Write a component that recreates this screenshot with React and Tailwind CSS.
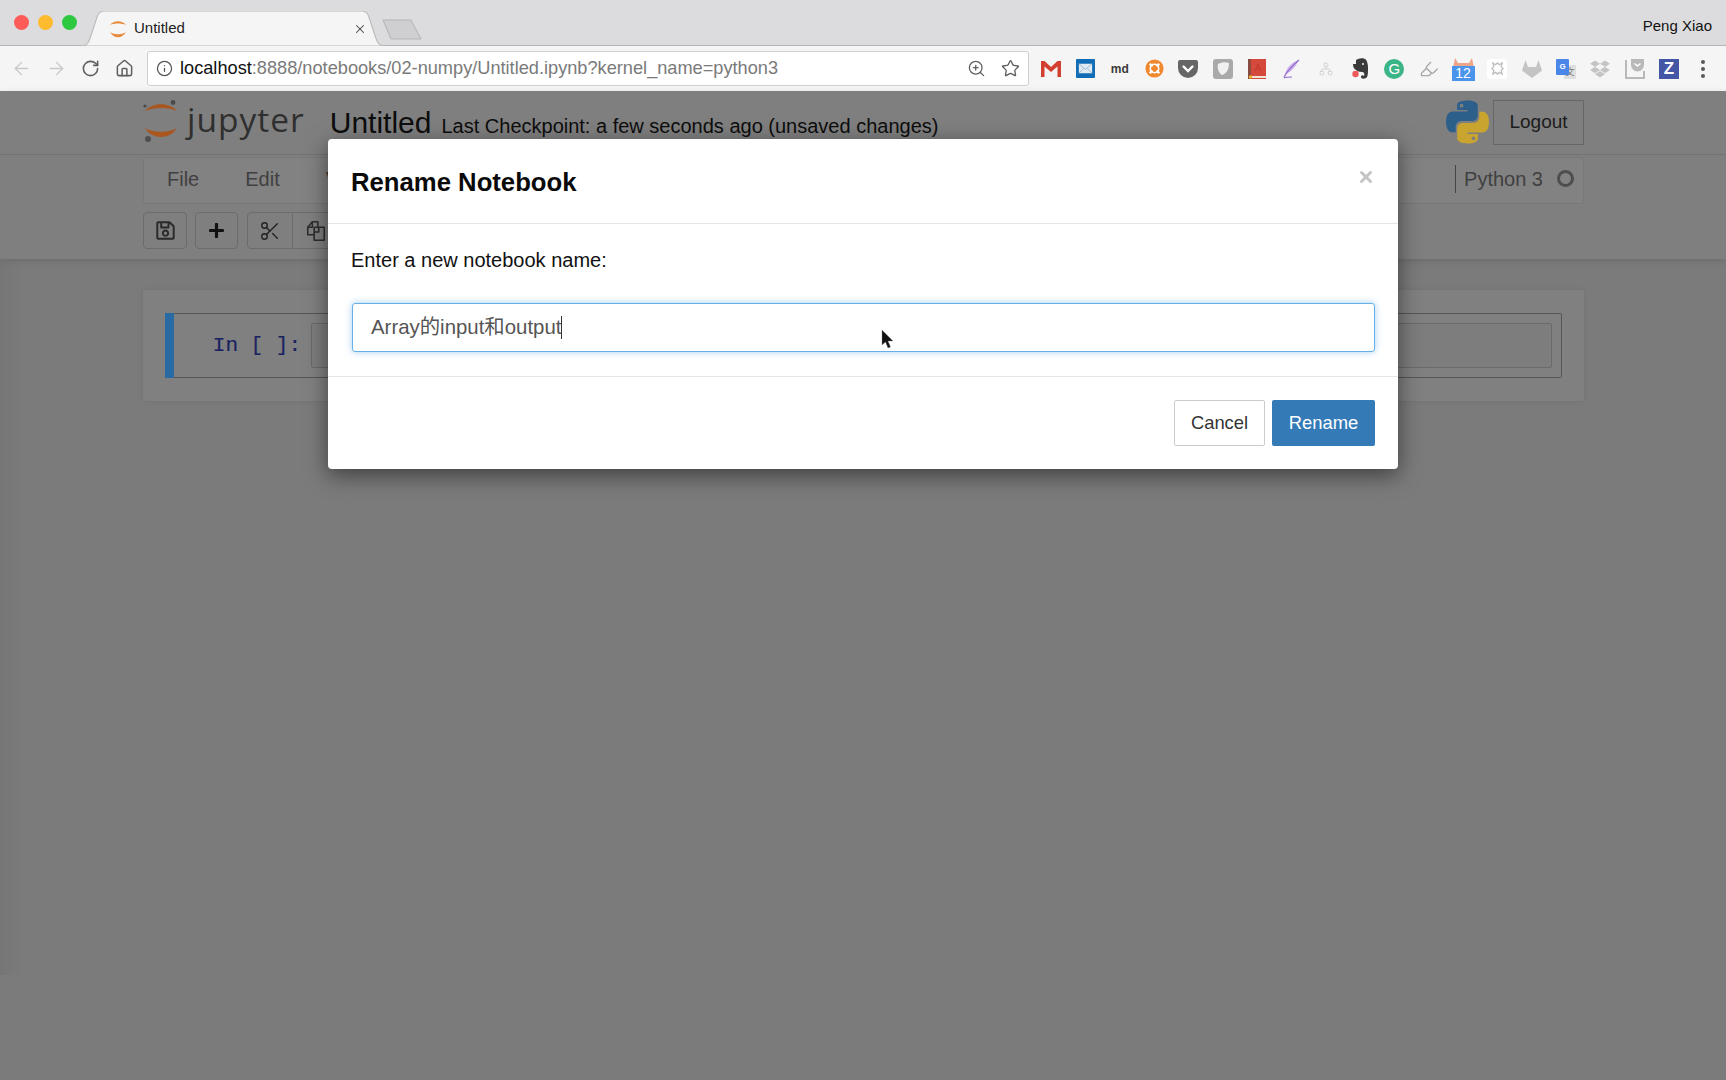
import { ArrowLeft, ArrowRight, RotateCw, Home, Info, ZoomIn, Star, X, Network, Highlighter } from 'lucide-react';
import { FaPlus, FaRegSave, FaDropbox } from 'react-icons/fa';
import { LuScissors } from 'react-icons/lu';

const sans = 'font-["Liberation_Sans",Arial,"Noto_Sans_CJK_SC",sans-serif]';

function JupyterMark({ className }) {
  return (
    <svg viewBox="0 0 36 44" className={className}>
      <path d="M2 12 C9 3 27 3 34 12 C26 8 10 8 2 12 Z" fill="#a9561f" />
      <path d="M2 29 C10 34 26 34 34 29 C27 41 9 41 2 29 Z" fill="#a9561f" />
      <circle cx="2" cy="7" r="1.6" fill="#4a4a4a" />
      <circle cx="30" cy="3.5" r="2.4" fill="#4a4a4a" />
      <circle cx="5" cy="40" r="3" fill="#4f4f4f" />
    </svg>
  );
}

function TabFavicon() {
  return (
    <svg viewBox="0 0 20 20" className="w-[20px] h-[20px] shrink-0">
      <path d="M2 6 C6 1 14 1 18 6 C14 4 6 4 2 6 Z" fill="#e98a3c" />
      <path d="M2 13 C6 16 14 16 18 13 C14 20 6 20 2 13 Z" fill="#e98a3c" />
    </svg>
  );
}

function PythonLogo() {
  const blue = 'M54.9 0C26.9 0 28.6 12.1 28.6 12.1l0 12.6h26.7v3.8H18s-18-2-18 26.3 15.7 27.3 15.7 27.3h9.4V68.9s-.5-15.7 15.4-15.7h26.6s14.9.2 14.9-14.4V14.6S85 0 54.9 0zM40.2 8.5a4.8 4.8 0 1 1 0 9.6 4.8 4.8 0 0 1 0-9.6z';
  return (
    <svg viewBox="0 0 111 111" className="w-[43px] h-[44px]">
      <path d={blue} fill="#2d5f8b" />
      <path d={blue} fill="#c9a42f" transform="rotate(180 55.5 55.5)" />
    </svg>
  );
}

function CopyIcon() {
  return (
    <svg viewBox="0 0 24 24" className="w-[22px] h-[22px]" fill="none" stroke="#2c2c2c" strokeWidth="1.7" strokeLinejoin="round">
      <path d="M10 16H3V8l5-6h6v6" />
      <path d="M8 2v6H3" />
      <path d="M10 8h5l6 0v14H10z" fill="#7d7d7d" />
      <path d="M15 8v5h-5" />
    </svg>
  );
}

function ToolButton({ children, className = 'w-[44px] rounded-[4px]' }) {
  return (
    <div className={`h-[37px] border border-[#6c6c6c] flex items-center justify-center ${className}`}>
      {children}
    </div>
  );
}

const ext = {
  gmail: (
    <svg viewBox="0 0 20 18" className="w-[20px] h-[18px]">
      <rect width="20" height="17" y="0.5" fill="#f3f3f3" />
      <path d="M0 1h3.500L10 7l6.500-6H20v16h-3.500V6.500L10 12 3.500 6.500V17H0z" fill="#d23f31" />
    </svg>
  ),
  mail: (
    <svg viewBox="0 0 20 20" className="w-[19px] h-[19px]">
      <rect width="20" height="20" rx="1" fill="#0f6cb5" />
      <rect x="3" y="5" width="14" height="10" fill="#dfeaf3" />
      <path d="M3 5l7 6 7-6M3 15l5-5M17 15l-5-5" fill="none" stroke="#8fb1cc" strokeWidth="0.8" />
    </svg>
  ),
  md: <span className={`text-[12px] font-bold text-[#3a3a3a] ${sans}`}>md</span>,
  orange: (
    <svg viewBox="0 0 20 20" className="w-[19px] h-[19px]">
      <circle cx="10" cy="10" r="9.500" fill="#f0882e" />
      <circle cx="10" cy="10" r="4.500" fill="none" stroke="#fff" strokeWidth="1.600" />
      <path d="M5 5l3 3M15 5l-3 3M5 15l3-3M15 15l-3-3" stroke="#fff" strokeWidth="2.600" />
      <circle cx="10" cy="10" r="2.800" fill="#f0882e" />
    </svg>
  ),
  pocket: (
    <svg viewBox="0 0 20 18" className="w-[20px] h-[18px]">
      <path d="M0 2a2 2 0 0 1 2-2h16a2 2 0 0 1 2 2v6a10 10 0 0 1-20 0z" fill="#666" />
      <path d="M5.500 6.500L10 11l4.500-4.500" fill="none" stroke="#fff" strokeWidth="2.400" strokeLinecap="round" />
    </svg>
  ),
  shield: (
    <svg viewBox="0 0 20 20" className="w-[20px] h-[20px]">
      <rect width="20" height="20" rx="3" fill="#a9a9a9" />
      <path d="M5 5c4-2 8-2 11-1 0 6-2 10-7 12-3-2-5-6-4-11z" fill="#f1f1f1" />
    </svg>
  ),
  book: (
    <svg viewBox="0 0 18 20" className="w-[18px] h-[20px]">
      <rect width="18" height="20" fill="#d4493b" />
      <rect width="3" height="20" fill="#8b4a3f" />
      <rect x="3" y="17" width="15" height="2" fill="#efe6d6" />
      <circle cx="2.500" cy="18" r="1.800" fill="#eab32e" />
      <path d="M7 12l3-7 3 7M8 10h4" stroke="#c13b2e" strokeWidth="1" fill="none" />
    </svg>
  ),
  feather: (
    <svg viewBox="0 0 20 20" className="w-[20px] h-[20px]">
      <path d="M18 1C11 3 6 8 4 15c5-1 10-6 14-14z" fill="#cbb7ea" />
      <path d="M18 1C12 6 7 11 3 18M3 19c2-1 5-1 8-1" fill="none" stroke="#9668d0" strokeWidth="1.200" />
    </svg>
  ),
  sitemap: <Network size={14} color="#d0d0d0" strokeWidth={1.5} />,
  evernote: (
    <svg viewBox="0 0 18 22" className="w-[18px] h-[22px]">
      <path d="M2 6h3V2l2-1c2-1 6-1 7 0 2 1 3 5 3 9 0 5 0 9-2 10-2 1-5 1-5-1 0-2 2-2 3-1 1-2 0-4-2-4-3 0-5-1-6-2-2-1-3-3-3-6z" fill="#3a3a3a" />
      <circle cx="4.500" cy="16" r="3.200" fill="#ee5a5a" />
      <circle cx="12" cy="6" r="1" fill="#f5f5f5" />
    </svg>
  ),
  grammarly: (
    <div className={`w-[20px] h-[20px] rounded-full bg-[#3bb587] flex items-center justify-center text-white text-[15px] leading-none ${sans}`}>G</div>
  ),
  marker: <Highlighter size={20} color="#a8a8a8" strokeWidth={1.6} />,
  calendar: (
    <div className="relative w-[23px] h-[24px] mt-[1px]">
      <svg viewBox="0 0 23 12" className="w-[23px] h-[12px]">
        <path d="M1 11L3 1l3 5h11l3-5 2 10z" fill="#eea487" />
      </svg>
      <div className={`absolute left-0 bottom-0 w-[23px] h-[15px] bg-[#4a94ec] text-white text-[14px] leading-[15px] text-center ${sans}`}>12</div>
    </div>
  ),
  burst: (
    <div className="w-[20px] h-[20px] rounded-[3px] bg-white flex items-center justify-center">
      <svg viewBox="0 0 14 14" className="w-[13px] h-[13px]">
        <path d="M2 1l3 2 2-2 2 2 3-2-1 4 2 2-2 2 1 4-3-2-2 2-2-2-3 2 1-4-2-2 2-2z" fill="none" stroke="#bdbdbd" strokeWidth="1.400" />
      </svg>
    </div>
  ),
  gitlab: (
    <svg viewBox="0 0 20 18" className="w-[20px] h-[18px]">
      <path d="M10 18L0 10.500 3.500 0l2.500 7h8l2.500-7L20 10.500z" fill="#c4c4c4" />
    </svg>
  ),
  translate: (
    <div className={`relative w-[20px] h-[20px] ${sans}`}>
      <div className="absolute right-0 bottom-0 w-[12px] h-[14px] bg-[#dfdfdf] text-[9px] leading-[14px] text-center text-[#777] font-['Noto_Sans_CJK_SC',sans-serif]">文</div>
      <div className="absolute left-0 top-0 w-[13px] h-[16px] bg-[#4a86e8] rounded-[1px] text-white text-[8px] font-bold leading-[16px] text-center">G</div>
    </div>
  ),
  dropbox: <FaDropbox size={20} color="#c4c4c4" />,
  pocketGrey: (
    <svg viewBox="0 0 20 20" className="w-[20px] h-[20px]">
      <path d="M1 1v18h18v-7" fill="none" stroke="#b9b9b9" strokeWidth="2" />
      <path d="M6 0h13v6a6.500 6.500 0 0 1-13 0z" fill="#b9b9b9" />
      <path d="M9.500 4.500l3 2.500 3-2.500" fill="none" stroke="#fff" strokeWidth="1.500" />
    </svg>
  ),
  z: (
    <div className={`w-[20px] h-[20px] bg-[#4357a5] text-white text-[17px] font-bold leading-[20px] text-center ${sans}`}>Z</div>
  ),
  dots: (
    <div className="flex flex-col gap-[3px]">
      <span className="w-[4px] h-[4px] rounded-full bg-[#5a5a5a]" />
      <span className="w-[4px] h-[4px] rounded-full bg-[#5a5a5a]" />
      <span className="w-[4px] h-[4px] rounded-full bg-[#5a5a5a]" />
    </div>
  ),
};

const extOrder = ['gmail', 'mail', 'md', 'orange', 'pocket', 'shield', 'book', 'feather', 'sitemap', 'evernote', 'grammarly', 'marker', 'calendar', 'burst', 'gitlab', 'translate', 'dropbox', 'pocketGrey', 'z', 'dots'];

function BrowserChrome() {
  return (
    <div className={`${sans} shrink-0`}>
      <div className="h-[46px] bg-[#dcdcde] flex items-end border-b border-[#b5b5b5] pl-[14px]">
        <div className="flex gap-[9px] self-start mt-[15px]">
          <span className="w-[15px] h-[15px] rounded-full bg-[#fc5b57]" />
          <span className="w-[15px] h-[15px] rounded-full bg-[#fdbb2d]" />
          <span className="w-[15px] h-[15px] rounded-full bg-[#2cc840]" />
        </div>
        <div className="relative w-[304px] h-[35px] ml-[4px] -mb-px flex items-center pl-[27px] pr-[18px] gap-[6px]">
          <svg viewBox="0 0 296 35" className="absolute inset-0 w-[304px] h-[35px]" preserveAspectRatio="none">
            <path d="M0 35 C6 35 7 32 9 27 L16 5 C17 2 19 0 23 0 H273 C277 0 279 2 280 5 L287 27 C289 32 290 35 296 35 Z" fill="#f5f5f5" stroke="#b9b9b9" />
          </svg>
          <div className="relative flex items-center gap-[6px] w-full">
            <TabFavicon />
            <span className="text-[15px] text-[#222]">Untitled</span>
            <X size={14} color="#444" strokeWidth={1.8} className="ml-auto" />
          </div>
        </div>
        <svg viewBox="0 0 42 21" className="w-[42px] h-[21px] mb-[5px] -ml-[4px]">
          <path d="M2 1 H30 L40 20 H10 Z" fill="#cfcfd1" stroke="#b4b4b4" strokeLinejoin="round" />
        </svg>
        <span className="ml-auto self-start mt-[15px] mr-[14px] text-[15px] text-[#111]">Peng Xiao</span>
      </div>
      <div className="h-[45px] bg-[#f5f5f5] flex items-center pl-[11px]">
        <div className="flex items-center gap-[14px] w-[126px]">
          <ArrowLeft size={21} color="#c9c9c9" strokeWidth={1.6} />
          <ArrowRight size={21} color="#c9c9c9" strokeWidth={1.6} />
          <RotateCw size={19} color="#5f5f5f" strokeWidth={2} />
          <Home size={19} color="#5f5f5f" strokeWidth={1.9} className="ml-[1px]" />
        </div>
        <div className="ml-[10px] w-[882px] h-[35px] bg-white border border-[#cfcfcf] rounded-[3px] flex items-center pl-[8px] pr-[8px]">
          <Info size={17} color="#555" strokeWidth={1.8} />
          <div className="ml-[7px] text-[18.2px] text-[#7a7a7a] whitespace-nowrap">
            <span className="text-[#111]">localhost</span>:8888/notebooks/02-numpy/Untitled.ipynb?kernel_name=python3
          </div>
          <ZoomIn size={19} color="#5f5f5f" strokeWidth={1.6} className="ml-auto" />
          <Star size={19} color="#5f5f5f" strokeWidth={1.7} className="ml-[15px]" />
        </div>
        <div className="flex items-center ml-[5px]">
          {extOrder.map((k) => (
            <div key={k} className="w-[34.33px] h-[30px] flex items-center justify-center">{ext[k]}</div>
          ))}
        </div>
      </div>
    </div>
  );
}

function NotebookPage() {
  return (
    <div className={`flex-1 bg-[#7b7b7b] ${sans}`}>
      <div className="bg-[#7f7f7f] shadow-[0_2px_7px_rgba(0,0,0,0.12)] h-[168px]">
        <div className="h-[64px] border-b border-[#737373] pl-[143px] pr-[142px] flex items-center">
          <JupyterMark className="w-[36px] h-[44px] -mt-[3px]" />
          <span className="ml-[8px] -mt-[6px] text-[33.5px] leading-none tracking-[1px] text-[#2f2f2f] font-['Open_Sans',sans-serif]">jupyter</span>
          <span className="ml-[25px] text-[30px] leading-none text-[#0d0d0d]">Untitled</span>
          <span className="ml-[10px] mt-[6px] text-[20px] leading-none text-[#0d0d0d]">Last Checkpoint: a few seconds ago (unsaved changes)</span>
          <div className="ml-auto flex items-center gap-[4px] -mt-[1px]">
            <PythonLogo />
            <div className="w-[91px] h-[45px] border border-[#666] text-[19px] text-[#1c1c1c] flex items-center justify-center">Logout</div>
          </div>
        </div>
        <div className="ml-[143px] mr-[142px] mt-[2px] h-[47px] pb-[4px] border border-[#787878] rounded-[3px] bg-[#828282] flex items-center pl-[23px] text-[20px] text-[#404040]">
          <span>File</span>
          <span className="ml-[46px]">Edit</span>
          <span className="ml-[46px]">View</span>
          <div className="ml-auto flex items-center pr-[9px]">
            <span className="w-px h-[28px] bg-[#444] mr-[8px]" />
            <span>Python 3</span>
            <span className="ml-[14px] w-[17px] h-[17px] rounded-full border-[3px] border-[#4d4d4d]" />
          </div>
        </div>
        <div className="mx-[143px] mt-[8px] flex items-center">
          <ToolButton><FaRegSave size={21} color="#2a2a2a" /></ToolButton>
          <ToolButton className="ml-[8px] w-[43px] rounded-[4px]"><FaPlus size={17} color="#111" /></ToolButton>
          <ToolButton className="ml-[9px] w-[46px] rounded-l-[4px]"><LuScissors size={22} color="#222" strokeWidth={1.5} /></ToolButton>
          <ToolButton className="w-[46px] border-l-0"><CopyIcon /></ToolButton>
        </div>
      </div>
      <div className="ml-[143px] mr-[142px] mt-[31px] h-[111px] bg-[#808080] shadow-[0_0_6px_rgba(0,0,0,0.08)] pt-[23px] pl-[22px] pr-[22px]">
        <div className="flex h-[65px]">
          <div className="w-[9px] bg-[#2a6aa3]" />
          <div className="flex-1 border border-l-0 border-[#565656] rounded-r-[2px] flex items-center">
            <span className="w-[137px] pr-[10px] shrink-0 text-right text-[21px] font-['Liberation_Mono',monospace] text-[#1a2360] [-webkit-text-stroke:0.2px]">In [ ]:</span>
            <div className="flex-1 mr-[9px] h-[45px] border border-[#6a6a6a] rounded-[2px] bg-[#7d7d7d]" />
          </div>
        </div>
      </div>
    </div>
  );
}

function RenameModal() {
  return (
    <div className="absolute left-0 right-0 top-[91px] flex justify-center pt-[48px]">
      <div className={`w-[1070px] bg-white rounded-[4px] shadow-[0_6px_22px_rgba(0,0,0,0.5)] ${sans}`}>
        <div className="h-[85px] border-b border-[#e5e5e5] pl-[23px] pr-[23px] flex items-center justify-between">
          <h4 className="text-[25.7px] font-bold text-[#0a0a0a] leading-none mt-[3px]">Rename Notebook</h4>
          <span className="text-[#c4c4c4] -mt-[8px]">
            <X size={18} strokeWidth={4} />
          </span>
        </div>
        <div className="h-[152px] pl-[24px] pr-[23px] pt-[23px]">
          <p className="-ml-px text-[20px] leading-[26px] text-[#111]">Enter a new notebook name:</p>
          <div className="mt-[30px] h-[49px] border border-[#66afe9] rounded-[3px] shadow-[0_0_7px_rgba(102,175,233,0.6)] flex items-center pl-[18px] text-[20.4px] text-[#555]">
            <span className='font-["Liberation_Sans","Noto_Sans_CJK_SC",sans-serif]'>Array的input和output</span>
            <span className="w-px h-[23px] bg-[#333]" />
          </div>
        </div>
        <div className="h-[93px] border-t border-[#e5e5e5] pr-[23px] flex items-center justify-end gap-[7px] text-[18.4px]">
          <div className="w-[91px] h-[46px] border border-[#cccccc] rounded-[2px] text-[#333] flex items-center justify-center">Cancel</div>
          <div className="w-[103px] h-[46px] bg-[#337ab7] rounded-[2px] text-white flex items-center justify-center">Rename</div>
        </div>
      </div>
    </div>
  );
}

export default function App() {
  return (
    <div className="relative w-[1726px] h-[1080px] overflow-hidden flex flex-col">
      <BrowserChrome />
      <NotebookPage />
      <RenameModal />
      {/* faint shade down the left window edge */}
      <div className="absolute left-0 top-[260px] h-[715px] w-[24px] bg-linear-to-r from-[#6c6c6c]/35 to-transparent" />
      {/* mouse pointer on top of the dialog */}
      <svg viewBox="0 0 14 20" className="absolute left-[881px] top-[330px] w-[14px] h-[20px]">
        <path d="M1 0v15l3.500-3 2.500 6 2.500-1-2.500-6h5z" fill="#111" stroke="#888" strokeWidth="0.4" />
      </svg>
    </div>
  );
}
